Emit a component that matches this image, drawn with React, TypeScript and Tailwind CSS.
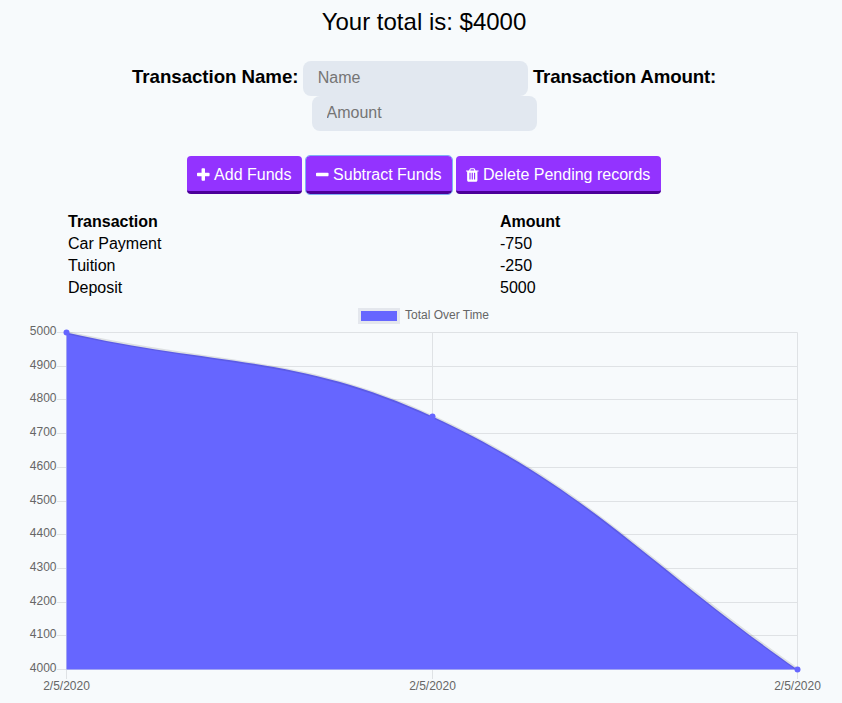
const rows = [
  { name: 'Car Payment', amount: '-750' },
  { name: 'Tuition', amount: '-250' },
  { name: 'Deposit', amount: '5000' },
];

const left = 66.5;
const mid = 432.5;
const right = 797.5;
const top = 29.5;
const bottom = 366.5;
const ticks = [5000, 4900, 4800, 4700, 4600, 4500, 4400, 4300, 4200, 4100, 4000];

const curve = `M${left} ${top} C212.7 63 298.5 51.5 ${mid} 113.5 C590.6 186.5 651.3 265 ${right} ${bottom}`;

const plusPath =
  'M1600 736v192q0 40-28 68t-68 28h-416v416q0 40-28 68t-68 28h-192q-40 0-68-28t-28-68v-416h-416q-40 0-68-28t-28-68v-192q0-40 28-68t68-28h416v-416q0-40 28-68t68-28h192q40 0 68 28t28 68v416h416q40 0 68 28t28 68z';
const minusPath =
  'M1600 736v192q0 40-28 68t-68 28h-1216q-40 0-68-28t-28-68v-192q0-40 28-68t68-28h1216q40 0 68 28t28 68z';
const trashPath =
  'M704 1376v-704q0-14-9-23t-23-9h-64q-14 0-23 9t-9 23v704q0 14 9 23t23 9h64q14 0 23-9t9-23zm256 0v-704q0-14-9-23t-23-9h-64q-14 0-23 9t-9 23v704q0 14 9 23t23 9h64q14 0 23-9t9-23zm256 0v-704q0-14-9-23t-23-9h-64q-14 0-23 9t-9 23v704q0 14 9 23t23 9h64q14 0 23-9t9-23zm-544-992h448l-48-117q-7-9-17-11h-317q-10 2-17 11zm928 32v64q0 14-9 23t-23 9h-96v948q0 83-47 143.5t-113 60.5h-832q-66 0-113-58.5t-47-141.5v-952h-96q-14 0-23-9t-9-23v-64q0-14 9-23t23-9h309l70-167q15-37 54-63t79-26h320q40 0 79 26t54 63l70 167h309q14 0 23 9t9 23z';

function Icon({ d }: { d: string }) {
  return (
    <svg viewBox="192 0 1408 1792" className="h-4 w-[12.57px] shrink-0" fill="currentColor">
      <path d={d} />
    </svg>
  );
}

function Chart() {
  return (
    <svg width="842" height="400" viewBox="0 0 842 400" className="block" fontFamily="'Liberation Sans', Arial, sans-serif">
      <rect x="359.5" y="6.5" width="39" height="13" fill="#6666ff" stroke="#e4e7ed" strokeWidth="3" />
      <text x="405" y="16" fontSize="12" fill="#666666">Total Over Time</text>

      {ticks.map((tick, i) => {
        const exact = top + (i * (bottom - top)) / 10;
        const y = Math.round(exact - 0.5) + 0.5;
        return (
          <g key={tick}>
            <line x1="57" x2={right} y1={y} y2={y} stroke="#dfe2e5" />
            <text x="57" y={Math.round(exact + 2.5)} fontSize="12" fill="#666666" textAnchor="end" dx="-0.5">{tick}</text>
          </g>
        );
      })}
      {[left, mid, right].map((x) => (
        <g key={x}>
          <line x1={x} x2={x} y1={top} y2={376} stroke="#dfe2e5" />
          <text x={x} y="387" fontSize="12" fill="#666666" textAnchor="middle">2/5/2020</text>
        </g>
      ))}

      <path d={`${curve} L${right} ${bottom} L${left} ${bottom} Z`} fill="#6666ff" />
      <path d={curve} fill="none" stroke="#000000" strokeOpacity="0.1" strokeWidth="3" />
      <circle cx={left} cy={top} r="3" fill="#6666ff" />
      <circle cx={mid} cy={113.5} r="3" fill="#6666ff" />
      <circle cx={right} cy={bottom} r="3" fill="#6666ff" />
    </svg>
  );
}

export default function App() {
  return (
    <div className="min-h-[703px] overflow-hidden bg-[#f7fafc] font-['Liberation_Sans',Arial,sans-serif] text-black">
      <div className="pl-1.5 text-center">
        <div className="pt-1.5 text-2xl leading-8">Your total is: $4000</div>

        <form className="mx-auto mt-[23px] w-[700px] text-[18.72px] leading-[35px]">
          <label className="mr-[-1px] align-top leading-[32px] font-bold tracking-[-0.05px]">Transaction Name:</label>{' '}
          <input
            type="text"
            placeholder="Name"
            className="h-[35px] w-[225px] rounded-lg bg-[#e2e8f0] px-[15px] pb-0.5 align-top text-base placeholder:text-[#757575]"
          />{' '}
          <label className="align-top leading-[32px] font-bold tracking-[-0.17px]">Transaction Amount:</label>{' '}
          <input
            type="text"
            placeholder="Amount"
            className="h-[35px] w-[225px] rounded-lg bg-[#e2e8f0] px-[15px] pb-0.5 align-top text-base placeholder:text-[#757575]"
          />
        </form>

        <div className="mt-[25px] flex justify-center gap-1">
          <button className="flex h-[38px] w-[115px] items-center gap-[4.5px] rounded border-b-[3px] border-[#4c0099] bg-[#9333ff] pt-0.5 pl-2.5 text-base text-white">
            <Icon d={plusPath} /> Add Funds
          </button>
          <button className="flex h-[38px] w-[146px] items-center gap-[4.5px] rounded border-b-[3px] border-[#4c0099] bg-[#9333ff] pt-0.5 pl-2.5 text-base text-white outline-1 outline-[#7fb0f5]">
            <Icon d={minusPath} /> Subtract Funds
          </button>
          <button className="flex h-[38px] w-[205px] items-center gap-[4.5px] rounded border-b-[3px] border-[#4c0099] bg-[#9333ff] pt-0.5 pl-2.5 text-base text-white">
            <Icon d={trashPath} /> Delete Pending records
          </button>
        </div>
      </div>

      <table className="mt-[17px] ml-[67px] w-[600px] table-fixed text-left text-base leading-[22px]">
        <thead>
          <tr className="h-[22px]">
            <th className="w-[432px] p-0 pl-px font-bold">Transaction</th>
            <th className="p-0 pl-px font-bold">Amount</th>
          </tr>
        </thead>
        <tbody>
          {rows.map((row) => (
            <tr key={row.name} className="h-[22px]">
              <td className="p-0 pl-px">{row.name}</td>
              <td className="p-0 pl-px">{row.amount}</td>
            </tr>
          ))}
        </tbody>
      </table>

      <div className="mt-1">
        <Chart />
      </div>
    </div>
  );
}
